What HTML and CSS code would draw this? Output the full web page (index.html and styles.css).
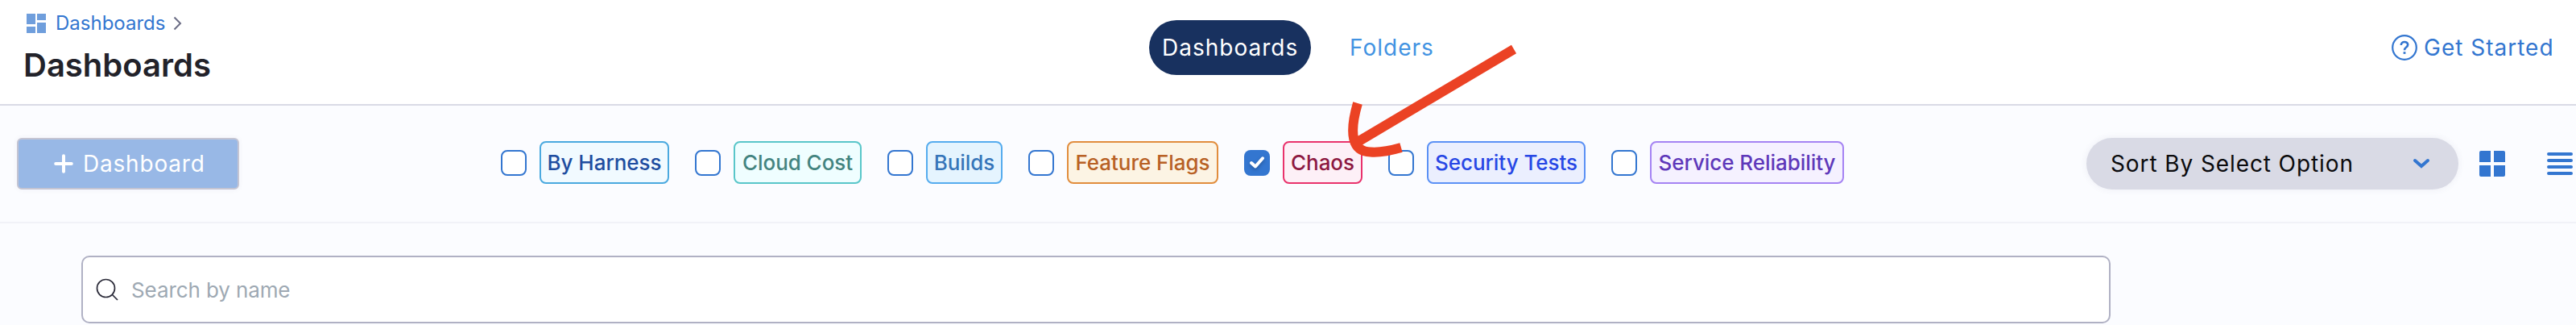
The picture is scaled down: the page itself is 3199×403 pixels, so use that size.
FILE: index.html
```html
<!DOCTYPE html>
<html lang="en">
<head>
<meta charset="utf-8">
<title>Dashboards</title>
<link rel="stylesheet" href="styles.css">
</head>
<body>
<header class="header">
  <div class="heading">
    <nav class="breadcrumb">
      <svg class="crumb-icon" width="24" height="24" viewBox="0 0 24 24" fill="#6f9edc"><path d="M0 0h11v13H0zM13 0h11v8H13zM0 16h11v8H0zM13 11h11v13H13z"/></svg>
      <a class="crumb">Dashboards</a>
      <svg class="crumb-arrow" width="12" height="18" viewBox="0 0 12 18" fill="none" stroke="#6b6d85" stroke-width="2"><path d="M1.500 1.500L9 9L1.500 16.500"/></svg>
    </nav>
    <h1 class="title">Dashboards</h1>
  </div>
  <nav class="tabs">
    <a class="tab tab-active">Dashboards</a>
    <a class="tab">Folders</a>
  </nav>
  <a class="help">
    <svg width="32" height="32" viewBox="0 0 32 32" fill="none" stroke="#3376d0" stroke-width="2.200"><circle cx="16" cy="16" r="14.800"/><path d="M11.800 13C11.800 7.800 20.200 7.800 20.200 12.600C20.200 15.600 16 15.500 16 19.200" stroke-width="2.600"/><path d="M16 21.200v2.700" stroke-width="2.800"/></svg>
    <span>Get Started</span>
  </a>
</header>
<section class="toolbar">
  <button class="new-button">
    <svg width="24" height="24" viewBox="0 0 24 24" fill="none" stroke="#fff" stroke-width="4" stroke-linecap="round"><path d="M12 2.200v19.600M2.200 12h19.600"/></svg>
    <span>Dashboard</span>
  </button>
  <div class="filters">
    <label class="filter"><span class="box"></span><span class="tag harness">By Harness</span></label>
    <label class="filter"><span class="box"></span><span class="tag cost">Cloud Cost</span></label>
    <label class="filter"><span class="box"></span><span class="tag builds">Builds</span></label>
    <label class="filter"><span class="box"></span><span class="tag flags">Feature Flags</span></label>
    <label class="filter"><span class="box checked"><svg width="32" height="32" viewBox="0 0 32 32" fill="none" stroke="#fff" stroke-width="4" stroke-linecap="round" stroke-linejoin="round"><path d="M9 16l5 4.500L23 10.300"/></svg></span><span class="tag chaos">Chaos</span></label>
    <label class="filter"><span class="box"></span><span class="tag security">Security Tests</span></label>
    <label class="filter"><span class="box"></span><span class="tag reliability">Service Reliability</span></label>
  </div>
  <div class="view-options">
    <button class="sort"><span>Sort By Select Option</span>
      <svg width="22" height="14" viewBox="0 0 22 14" fill="none" stroke="#3376d0" stroke-width="4" stroke-linecap="round"><path d="M3 3l8 7l8-7"/></svg>
    </button>
    <svg class="grid-icon" width="32" height="32" viewBox="0 0 32 32" fill="#3376d0"><path d="M2 0h12v14H0V2a2 2 0 0 1 2-2zM18 0h12a2 2 0 0 1 2 2v12H18zM0 18h14v14H2a2 2 0 0 1-2-2zM18 18h14v12a2 2 0 0 1-2 2H18z"/></svg>
    <svg class="list-icon" width="32" height="28" viewBox="0 0 32 28" fill="none" stroke="#3376d0" stroke-width="4" stroke-linecap="round"><path d="M2 2h28M2 10h28M2 18h28M2 26h28"/></svg>
  </div>
</section>
<main class="content">
  <div class="search">
    <svg width="28" height="28" viewBox="0 0 28 28" fill="none" stroke="#2c2c3a" stroke-width="1.700"><circle cx="12.500" cy="12.500" r="11"/><path d="M20 20l7 7"/></svg>
    <span>Search by name</span>
  </div>
</main>
<svg class="arrow" width="220" height="150" viewBox="0 0 220 150" fill="none" stroke="#eb4224" stroke-width="12"><path d="M210 11Q90 82 16 126M16 78C5 116 9 138 32 138.500C44 139.500 56 137 70 133"/></svg>
</body>
</html>
```
FILE: styles.css
```css
* { box-sizing: border-box; }
body {
  margin: 0;
  width: 3199px;
  height: 403px;
  overflow: hidden;
  background: #fbfcff;
  font-family: Inter, "Liberation Sans", sans-serif;
  position: relative;
}
svg { display: block; flex: none; }
span, a { white-space: nowrap; }
button { border: 0; font: inherit; }

.header {
  height: 131px;
  background: #fff;
  border-bottom: 2px solid #d9dae5;
  display: grid;
  grid-template-columns: 1427px 1fr auto;
  padding-right: 27px;
}
.heading { padding: 13px 0 0 29px; }
.breadcrumb { display: flex; align-items: center; height: 32px; padding-left: 4px; }
.crumb { font-size: 24px; line-height: 32px; color: #3376d0; margin-left: 12px; width: 146px; }
.title { margin: 7px 0 0; font-size: 40px; line-height: 58px; font-weight: 640; color: #22222a; }

.tabs { display: flex; align-items: flex-start; padding-top: 25px; gap: 32px; }
.tab {
  height: 68px;
  line-height: 68px;
  padding: 0 16px;
  border-radius: 34px;
  font-size: 28px;
  letter-spacing: 1px;
  color: #4293e2;
}
.tab-active { width: 201px; background: #18315f; color: #fff; }
.help {
  display: flex;
  align-items: center;
  gap: 8px;
  height: 68px;
  margin-top: 25px;
  width: 202px;
  font-size: 28px;
  letter-spacing: 1px;
  color: #3376d0;
}

.toolbar {
  height: 146px;
  border-bottom: 2px solid #f1f2f8;
  display: flex;
  align-items: flex-start;
  padding: 40px 4px 0 21px;
}
.new-button {
  width: 276px;
  height: 64px;
  border: 2px solid #c5c5d3;
  border-radius: 6px;
  background: #98b8e6;
  color: #fff;
  display: flex;
  align-items: center;
  gap: 12px;
  padding: 0 0 0 44px;
  font-size: 28px;
  letter-spacing: 0.800px;
  box-shadow: 0 0 6px rgba(60, 70, 120, 0.060);
}
.filters { display: flex; gap: 32px; margin: 4px 0 0 325px; }
.filter { display: flex; gap: 16px; }
.box {
  width: 32px;
  height: 32px;
  margin-top: 11px;
  border: 2px solid #3376d0;
  border-radius: 8px;
  background: #fff;
}
.checked { border: 0; background: #3376d0; }
.checked svg { filter: drop-shadow(0 2px 2px rgba(0, 0, 0, 0.250)); }
.tag {
  height: 53px;
  line-height: 49px;
  border: 2px solid;
  border-radius: 8px;
  padding: 0;
  text-align: center;
  font-size: 26px;
  font-weight: 530;
  letter-spacing: -0.050px;
}
.harness { width: 161px; color: #1f4da0; background: #f1faff; border-color: #4aa9df; }
.cost { width: 159px; color: #438480; background: #effeff; border-color: #59c6c9; }
.builds { width: 95px; color: #3675b9; background: #e5f4fe; border-color: #55acee; }
.flags { width: 188px; color: #b86125; background: #fcf4e4; border-color: #e18d3d; }
.chaos { width: 99px; color: #8d1941; background: #fdf0f7; border-color: #e9326c; }
.security { width: 197px; color: #2747e5; background: #ebeffe; border-color: #5b91f5; }
.reliability { width: 241px; color: #5e38ba; background: #f5f1ff; border-color: #a583f3; }

.view-options { display: flex; margin-left: auto; }
.sort {
  width: 462px;
  height: 64px;
  border-radius: 32px;
  background: #d9dae5;
  color: #0b0b0d;
  display: flex;
  align-items: center;
  justify-content: space-between;
  padding: 0 35px 0 30px;
  font-size: 28px;
  letter-spacing: 0.900px;
  box-shadow: 0 0 8px rgba(60, 70, 120, 0.080);
}
.grid-icon { margin: 16px 0 0 26px; }
.list-icon { margin: 18px 0 0 52px; }

.content { padding: 40px 0 0 101px; }
.search {
  width: 2520px;
  height: 84px;
  border: 2px solid #b0b1c4;
  border-radius: 10px;
  background: #fff;
  display: flex;
  align-items: center;
  gap: 16px;
  padding-left: 16px;
  font-size: 26px;
  letter-spacing: -0.100px;
  color: #9ea9b3;
}
.arrow { position: absolute; left: 1670px; top: 50px; }
```
